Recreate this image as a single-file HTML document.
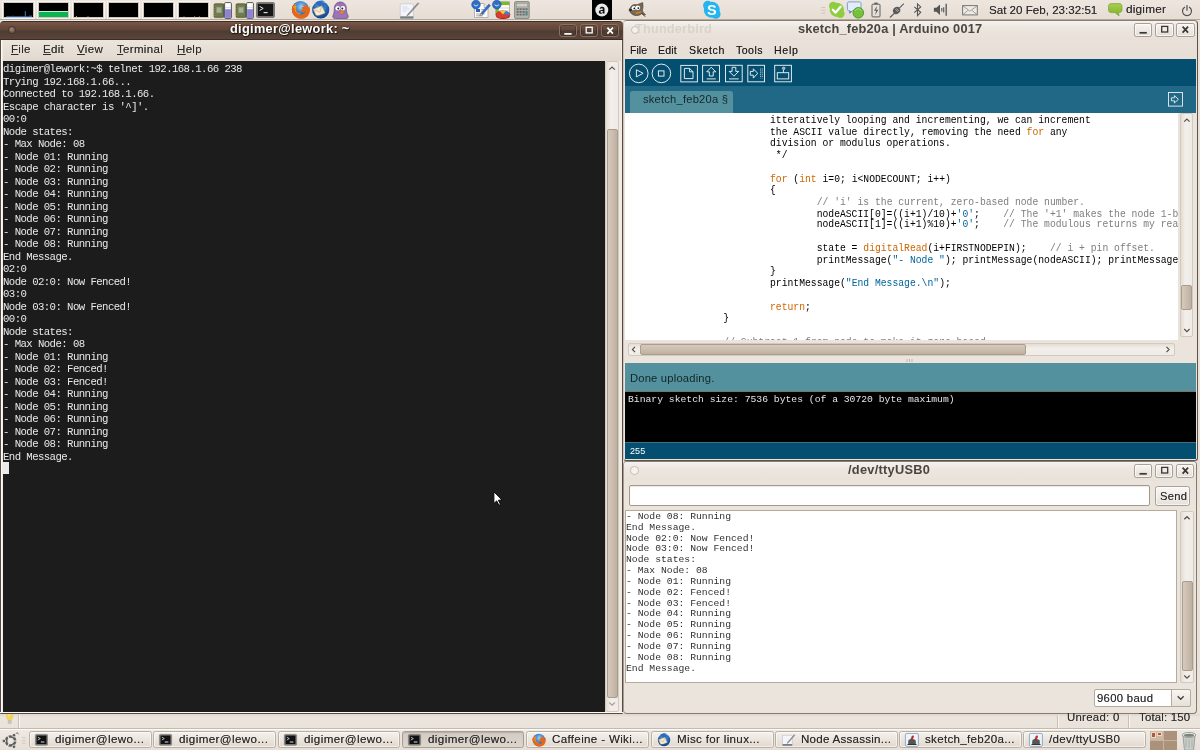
<!DOCTYPE html>
<html><head><meta charset="utf-8"><title>desktop</title>
<style>
html,body{margin:0;padding:0}
body{width:1200px;height:750px;overflow:hidden;position:relative;background:#e9e2da;font-family:"Liberation Sans",sans-serif;color:#2e2e2e}
.a{position:absolute;box-sizing:border-box}
.t{position:absolute;white-space:pre;line-height:1;will-change:transform}
pre{will-change:transform}
svg{position:absolute;overflow:visible}
pre{margin:0}
.mono{font-family:"Liberation Mono",monospace;font-size:9.72px;white-space:pre}
.k{color:#c60}.s{color:#069}.c{color:#7e7e7e}
.mon{position:absolute;box-sizing:border-box;background:#000;border:1px solid #cfc6bc;box-shadow:0 0 0 1px #f7f4f1}
.wb{position:absolute;box-sizing:border-box;border:1px solid #8a7263;border-radius:3px;background:linear-gradient(#705444,#5c4539 48%,#4b3a32 52%,#54403600);box-shadow:inset 0 0 0 1px rgba(40,25,18,.35)}
.wbl{position:absolute;box-sizing:border-box;border:1px solid #a89e94;border-radius:2.2px;background:linear-gradient(#f7f4f1,#e4ded7);box-shadow:inset 0 0 0 1px rgba(255,255,255,.65)}
.btn{position:absolute;box-sizing:border-box;border:1px solid #aaa093;border-radius:2.5px;background:linear-gradient(#f9f7f5,#e7e1da);box-shadow:inset 0 0 0 1px rgba(255,255,255,.6)}
.tb{position:absolute;box-sizing:border-box;border:1px solid #b9b0a5;border-radius:2.5px;background:linear-gradient(#f5f1ec,#ece5de 50%,#e2d9d0);box-shadow:inset 0 0 0 1px rgba(255,255,255,.55)}
.tb.act{background:linear-gradient(#d3cbc2,#ddd6ce);box-shadow:inset 0 1px 1px rgba(0,0,0,.14);border-color:#a89e92}
.sbv{position:absolute;box-sizing:border-box;background:linear-gradient(90deg,#e4ddd5,#f2eee9 40%,#f0ebe6);border:1px solid #d2c9bf;border-radius:2px}
.sbh{position:absolute;box-sizing:border-box;background:linear-gradient(#e4ddd5,#f2eee9 40%,#f0ebe6);border:1px solid #d2c9bf;border-radius:2px}
.th{position:absolute;box-sizing:border-box;background:linear-gradient(90deg,#d6cabd,#cbbdaf 50%,#bfb0a1);border:1px solid #ab9d8e;border-radius:2px}
.thh{position:absolute;box-sizing:border-box;background:linear-gradient(#d6cabd,#cbbdaf 50%,#bfb0a1);border:1px solid #ab9d8e;border-radius:2px}
</style></head><body>
<div class="a" style="left:0.00px;top:0.00px;width:1200.00px;height:20.30px;background:linear-gradient(#ede6df,#e6ddd4);border-bottom:1px solid #b3a89c"></div>
<div class="mon" style="left:3.00px;top:2.30px;width:31.00px;height:16.00px;"><svg style="left:0;top:0" width="29" height="14" viewBox="0 0 29 14"><path d="M2 13.5h26" stroke="#1a4e9a" stroke-width="1"/><path d="M21.3 14V8.2" stroke="#3a8ee6" stroke-width=".9"/><path d="M4 14v-1.2M6 14v-1M9 14v-1.5M12 14v-1M15 14v-1.2M18 14v-1M26 14v-1.8M27.5 14v-1.5" stroke="#2f74d0" stroke-width=".8"/></svg></div>
<div class="mon" style="left:38.00px;top:2.30px;width:31.00px;height:16.00px;"><div class="a" style="left:0;top:7.7px;width:29px;height:1.6px;background:#b8f5d0"></div><div class="a" style="left:0;top:9.2px;width:29px;height:4.8px;background:#0bb352"></div></div>
<div class="mon" style="left:73.00px;top:2.30px;width:31.00px;height:16.00px;"><svg style="left:0;top:0" width="29" height="14" viewBox="0 0 29 14"><path d="M2.5 14v-1M14 14v-.8" stroke="#d8d020" stroke-width=".9"/></svg></div>
<div class="mon" style="left:108.00px;top:2.30px;width:31.00px;height:16.00px;"></div>
<div class="mon" style="left:143.00px;top:2.30px;width:31.00px;height:16.00px;"></div>
<div class="mon" style="left:178.00px;top:2.30px;width:31.00px;height:16.00px;"><svg style="left:0;top:0" width="29" height="14" viewBox="0 0 29 14"><path d="M5 14v-.7M15.5 14v-.7M20.5 14v-.7" stroke="#e08a30" stroke-width=".9"/></svg></div>
<svg style="left:211.80px;top:1.50px" width="22" height="17" viewBox="0 0 22 17" ><rect x="2.2" y="1.8" width="9.6" height="13.6" rx="1" fill="#6f7c52" stroke="#3c4430" stroke-width=".9"/>
<rect x="4.6" y="5.2" width="4.8" height="5.6" fill="#a7b092" stroke="#8d977a" stroke-width=".5"/>
<path d="M1.2 4.2h1.4M1.2 6.6h1.4M1.2 9h1.4M1.2 11.4h1.4M1.2 13.4h1.4M4 1.2v1M6 1.2v1M8 1.2v1M10 1.2v1M4 15.2v1.2M6 15.2v1.2M8 15.2v1.2M10 15.2v1.2" stroke="#c9b24a" stroke-width=".9"/>
<rect x="12.6" y=".6" width="6.8" height="15.8" rx="1" fill="#fff" stroke="#444" stroke-width=".9"/>
<rect x="13.1" y="7.2" width="5.8" height="8.7" fill="#8c82d6"/><path d="M13.1 5.4h5.8" stroke="#c8c8c8" stroke-width=".6"/></svg>
<svg style="left:233.60px;top:1.50px" width="22" height="17" viewBox="0 0 22 17" ><rect x="2.2" y="1.8" width="9.6" height="13.6" rx="1" fill="#6f7c52" stroke="#3c4430" stroke-width=".9"/>
<rect x="4.6" y="5.2" width="4.8" height="5.6" fill="#a7b092" stroke="#8d977a" stroke-width=".5"/>
<path d="M1.2 4.2h1.4M1.2 6.6h1.4M1.2 9h1.4M1.2 11.4h1.4M1.2 13.4h1.4M4 1.2v1M6 1.2v1M8 1.2v1M10 1.2v1M4 15.2v1.2M6 15.2v1.2M8 15.2v1.2M10 15.2v1.2" stroke="#c9b24a" stroke-width=".9"/>
<rect x="12.6" y=".6" width="6.8" height="15.8" rx="1" fill="#fff" stroke="#444" stroke-width=".9"/>
<rect x="13.1" y="7.2" width="5.8" height="8.7" fill="#8c82d6"/><path d="M13.1 5.4h5.8" stroke="#c8c8c8" stroke-width=".6"/></svg>
<svg style="left:255.60px;top:1.50px" width="19" height="16" viewBox="0 0 19 16" ><rect x=".5" y=".5" width="18" height="15" rx="1.2" fill="#8b8b8b" stroke="#6c6c6c" stroke-width=".8"/><rect x="1.8" y="1.8" width="15.4" height="12.4" fill="#161616"/>
<path d="M3.6 4.4l3.6 2-3.6 2" stroke="#e8e8e8" stroke-width="1" fill="none"/><path d="M7.6 10.6h4" stroke="#e8e8e8" stroke-width="1.1"/></svg>
<svg style="left:291.10px;top:0.10px" width="19.0" height="19.0" viewBox="0 0 19.0 19.0" ><defs><radialGradient id="ffg300" cx=".55" cy=".35" r=".6"><stop offset="0" stop-color="#9fd6f5"/><stop offset=".6" stop-color="#2f7fd0"/><stop offset="1" stop-color="#1a4a9a"/></radialGradient></defs>
<g transform="scale(1.000)"><circle cx="9.5" cy="9.5" r="8.6" fill="url(#ffg300)"/>
<path d="M1.2 6.5C.2 10.5 1.5 15 5.2 17.4c4 2.5 9.3 1.6 12-2 2.2-3 2.3-6.8.9-9.8.2 1.6-.1 2.8-.6 3.6-.2-2.6-1.6-4.6-3.3-5.7 1 1.4 1.3 2.6 1.1 3.7-1-1.9-2.6-2.6-4.4-2.4 1.3.5 2 1.3 2.2 2.3-1.2-.3-2.3 0-3 .8.8 0 1.4.4 1.6 1-.5.8-1.5 1-2.3 1 .1 1 .9 1.8 2 2.1 1.2.3 2.2-.2 3-.8-.3 1.8-2 3.2-4.2 3.2-2.7 0-4.6-1.8-5-4.2-.2-1.4.2-2.6.8-3.4-1 .3-1.7.9-2.2 1.700.1-1.500.8-2.900 1.9-3.800C3.700 4.500 2 5 1.200 6.500z" fill="#e8661a"/>
<path d="M5.500 3.600C3.900 4.600 3 6.300 2.900 7.900c.5-.8 1.200-1.400 2.200-1.700-.6.800-1 2-.8 3.400.4 2.400 2.300 4.200 5 4.200" fill="none" stroke="#f7a21b" stroke-width="1"/></g></svg>
<svg style="left:311.10px;top:0.10px" width="19.0" height="19.0" viewBox="0 0 19.0 19.0" ><defs><radialGradient id="tbg320" cx=".5" cy=".3" r=".7"><stop offset="0" stop-color="#6fb0ea"/><stop offset=".6" stop-color="#1f5fb5"/><stop offset="1" stop-color="#123a80"/></radialGradient></defs>
<g transform="scale(1.000)"><circle cx="9.700" cy="9.800" r="8.600" fill="url(#tbg320)"/>
<path d="M4.500 2.500C7 .300 11.500-.200 14 1.200c-2 .1-3.300.7-4.200 1.600 2.500-.2 5 .8 6.700 2.800-1.600-.7-3-.8-4.300-.5 1.500.7 2.700 2 3.300 3.600-2-1.600-4.500-2.200-7-1.500z" fill="#2a6ac0"/>
<path d="M2.200 9.200l8.600-3.400 3.400 7.200-8.800 3.600z" fill="#f4ead2" stroke="#b89a5a" stroke-width=".5"/><path d="M2.200 9.200l6.800 3 1.800-6.400" fill="none" stroke="#c9a766" stroke-width=".6"/>
<path d="M3 14.500c1.500 2.300 4.500 3.600 7.500 3.200 3.500-.5 6-3 6.700-6-1.200 2.400-3.500 3.800-6.200 4-3 .3-5.800-.2-8-1.200z" fill="#1b4f9f"/></g></svg>
<svg style="left:331.00px;top:1.00px" width="18" height="18" viewBox="0 0 18 18" ><path d="M4.500 17.500C2 17.300 1.200 16 2 14.500 3 12.500 3.300 10 3.300 7.500 3.300 3.500 6 1 9.300 1s6 2.500 6 6.200c0 2.300.4 4.800 1.700 7.300.7 1.400.2 2.800-2 3z" fill="#9a73b8" stroke="#6a4a8a" stroke-width=".7"/>
<circle cx="6.800" cy="7.200" r="2.300" fill="#fff"/><circle cx="11.800" cy="7.200" r="2.300" fill="#fff"/><circle cx="7.300" cy="7.500" r="1" fill="#222"/><circle cx="11.300" cy="7.500" r="1" fill="#222"/>
<path d="M7.800 10.800l3.200-1.200 2.600 1.800-3 1.600z" fill="#f08a24" stroke="#b85a10" stroke-width=".4"/></svg>
<svg style="left:398.50px;top:1.50px" width="21" height="18" viewBox="0 0 21 18" ><rect x="1.200" y="1.800" width="13.200" height="14.200" rx=".8" fill="#f4f4fa" stroke="#c4c4cc" stroke-width=".7"/><rect x="1.200" y="14.300" width="13.200" height="2.300" fill="#7a8088"/>
<path d="M3.500 5h5M3.500 7h7M3.500 9h4" stroke="#c9cbe8" stroke-width=".7"/><path d="M19 .8L9.200 11.800l-1.400 2 2.200-1.200L19.800 1.600z" fill="#9a9a9a" stroke="#666" stroke-width=".5"/></svg>
<svg style="left:471.00px;top:0.00px" width="20" height="19" viewBox="0 0 20 19" ><path d="M3.500 3.500h9.500l4 4V17.500H3.500z" fill="#fdfdfd" stroke="#9a9a9a" stroke-width=".7"/><path d="M13 3.500v4h4" fill="#e4e4e4" stroke="#9a9a9a" stroke-width=".6"/>
<rect x="5" y="9" width="4" height="3" fill="#2a5fb5"/><path d="M5 14h9M5 15.800h7M10.300 9.500h4M10.300 11.200h4" stroke="#8a8a8a" stroke-width=".7"/>
<path d="M17.800 4.200l1.600 1.400-8 9-2.600 1.400 1-2.600z" fill="#2f6fd0" stroke="#1a3f80" stroke-width=".5"/><path d="M9.800 13.400l-1 2.600 2.600-1.400z" fill="#e8c060"/>
<circle cx="5" cy="4.600" r="4.300" fill="#2d6fc8" stroke="#1d4f98" stroke-width=".6"/><path d="M2.300 4.200c1 .2 1.700.8 2.700 1.600 1-.8 1.700-1.400 2.700-1.600-.6 1-1.500 1.800-2.700 2.400C3.800 6 2.900 5.200 2.300 4.200z" fill="#fff"/></svg>
<svg style="left:491.50px;top:0.00px" width="19" height="19" viewBox="0 0 19 19" ><rect x="3.800" y="1.800" width="13.700" height="13.500" fill="#fdfdfd" stroke="#9a9a9a" stroke-width=".7"/><rect x="3.800" y="1.800" width="13.700" height="3.300" fill="#7ab82e"/><rect x="3.800" y="5.100" width="3" height="10" fill="#7ab82e"/>
<path d="M6.800 8h10.700M6.800 10.800h10.700" stroke="#bbb" stroke-width=".6"/>
<ellipse cx="11" cy="14.500" rx="7" ry="3.600" fill="#e23a2e" stroke="#a21a12" stroke-width=".5"/><path d="M11 14.500L8 11.300c2-.5 4-.5 6 0z" fill="#f4d21e"/><path d="M11 14.500l3-3.200c2.300.6 3.800 1.700 4 3.200z" fill="#3a7fd8"/><path d="M4 14.500v1.600c0 2 3.100 3 7 3s7-1 7-3v-1.600c0 2-3.100 3.600-7 3.600s-7-1.600-7-3.600z" fill="#b82218"/>
<circle cx="4.800" cy="4.600" r="4.300" fill="#2d6fc8" stroke="#1d4f98" stroke-width=".6"/><path d="M2.100 4.200c1 .2 1.700.8 2.700 1.600 1-.8 1.700-1.400 2.700-1.600-.6 1-1.500 1.800-2.700 2.400C3.600 6 2.700 5.200 2.100 4.200z" fill="#fff"/></svg>
<svg style="left:513.50px;top:0.80px" width="16" height="18" viewBox="0 0 16 18" ><rect x=".6" y=".6" width="14.600" height="16.800" rx="1.200" fill="#b4b4b0" stroke="#77776f" stroke-width=".8"/><rect x="2.400" y="2.300" width="11" height="3.600" fill="#cfd2c6" stroke="#8a8a82" stroke-width=".5"/>
<g fill="#6c6c68"><rect x="2.500" y="7.300" width="2.200" height="1.800"/><rect x="5.500" y="7.300" width="2.200" height="1.800"/><rect x="8.500" y="7.300" width="2.200" height="1.800"/><rect x="11.400" y="7.300" width="2.200" height="1.800"/>
<rect x="2.500" y="10" width="2.200" height="1.800"/><rect x="5.500" y="10" width="2.200" height="1.800"/><rect x="8.500" y="10" width="2.200" height="1.800"/><rect x="2.500" y="12.700" width="2.200" height="1.800"/><rect x="5.500" y="12.700" width="2.200" height="1.800"/><rect x="8.500" y="12.700" width="2.200" height="1.800"/></g><rect x="11.400" y="10" width="2.200" height="4.500" fill="#4a8a8a"/></svg>
<div class="a" style="left:591.80px;top:0.00px;width:19.80px;height:19.80px;background:#000"></div>
<svg style="left:591.80px;top:0.00px" width="20" height="20" viewBox="0 0 20 20" ><circle cx="9.800" cy="10" r="6.500" fill="#e8e8e8"/><path d="M7.600 8.300c.4-1.100 1.300-1.600 2.500-1.600 1.600 0 2.400.8 2.400 2.200v3.600c0 .4.100.7.300 1h-1.700c-.1-.2-.2-.5-.2-.7-.5.600-1.200.9-2 .9-1.300 0-2.100-.7-2.100-1.800 0-1.300 1-1.900 2.700-2l1.300-.1v-.5c0-.7-.4-1-1.100-1-.6 0-1 .2-1.200.7zm3.200 2.700l-1 .1c-.9.1-1.300.4-1.300.9s.4.700.9.700c.8 0 1.400-.5 1.400-1.300z" fill="#111"/></svg>
<svg style="left:627.50px;top:1.50px" width="18" height="16" viewBox="0 0 18 16" ><path d="M2.500 5.500C3.500 3 6 2 9 2.800L14.600.6c.6 2.600.5 5.200-.2 7.800.3 1.500 1.600 3 3.200 4.200-1.200.6-2.600.2-3.800-1.200-1.600 1.800-4.200 2.600-7 2-2.600-.6-4.400-2.200-5-4.200C.800 8.500.800 7.200 2.500 5.500z" fill="#76695a" stroke="#3f362c" stroke-width=".6"/>
<circle cx="5.800" cy="6.200" r="2.100" fill="#fff"/><circle cx="9.800" cy="5.800" r="2.300" fill="#fff"/><circle cx="6.300" cy="6.400" r=".9" fill="#111"/><circle cx="10.300" cy="6.100" r=".9" fill="#111"/>
<path d="M1 8c.8-1 2-1.200 3-.600-.200 1.100-1 1.800-2.200 1.800z" fill="#222"/><path d="M7.500 10.500l5-1.200 1.200 1.200-5.600 1.500z" fill="#e07a1a"/><path d="M13.500 11l3.600 3.600" stroke="#333" stroke-width="1"/></svg>
<svg style="left:702.10px;top:-0.10px" width="19.6" height="19.6" viewBox="0 0 19.6 19.6" ><g transform="scale(1.089)" fill="#24b4f0"><circle cx="9" cy="9" r="7.300"/><circle cx="5.300" cy="5" r="4.300"/><circle cx="12.700" cy="13" r="4.300"/></g></svg>
<div class="t" style="left:706.90px;top:2.53px;font-size:14.5px;letter-spacing:0px;color:#fff;font-weight:bold;">S</div>
<svg style="left:821.20px;top:5.50px" width="5" height="9" viewBox="0 0 5 9" ><path d="M.3 1.500h4M.3 4.300h4M.3 7.100h4" stroke="#cfc6bb" stroke-width="1"/></svg>
<svg style="left:827.50px;top:0.80px" width="17.6" height="17.6" viewBox="0 0 17.6 17.6" ><g transform="scale(0.978)" fill="#8fcc3e"><circle cx="9" cy="9" r="7.300"/><circle cx="5.300" cy="5" r="4.300"/><circle cx="12.700" cy="13" r="4.300"/></g></svg>
<svg style="left:828.00px;top:1.00px" width="17" height="17" viewBox="0 0 17 17" ><path d="M4.800 8.800l2.800 2.800 5-5.800" stroke="#fff" stroke-width="2.300" fill="none" stroke-linecap="round" stroke-linejoin="round"/></svg>
<svg style="left:847.00px;top:1.00px" width="18" height="18" viewBox="0 0 18 18" ><path d="M1.800.900h10.800c.8 0 1.400.6 1.400 1.400v6c0 .8-.6 1.400-1.400 1.400H5.600L2.800 12.200V9.700H1.800C1 9.700.4 9.100.4 8.300v-6C.4 1.500 1 .900 1.800.900z" fill="#e2ecfa" stroke="#6e98cf" stroke-width=".9"/><path d="M2.400 10.200l.2 2.300 2.400-2.300z" fill="#3f72b8"/>
<circle cx="11.300" cy="11.800" r="5.300" fill="#73c23a" stroke="#3f8a1e" stroke-width=".8"/><path d="M8 10a3.600 3.600 0 0 1 6.600 0" fill="none" stroke="#b5e68a" stroke-width="1" opacity=".7"/></svg>
<svg style="left:871.00px;top:1.50px" width="10" height="16" viewBox="0 0 10 16" ><rect x="1" y="2.200" width="8" height="12.700" rx=".8" fill="none" stroke="#5f5f5f" stroke-width="1"/><rect x="3.300" y=".600" width="3.400" height="1.600" fill="#5f5f5f"/><path d="M6.200 3.800L3 8.800h2.200L4 13.200l3.400-5.400H5.200z" fill="#5f5f5f"/></svg>
<svg style="left:888.50px;top:2.50px" width="16" height="16" viewBox="0 0 16 16" ><path d="M1 14.500L5.200 10.300" stroke="#5a5a5a" stroke-width="1.200"/><path d="M10.300 5.200L14.800.700" stroke="#5a5a5a" stroke-width="1.100"/><path d="M4.200 9.200c-.8-1.600-.2-3.200 1.300-4.400 1.400-1.200 3-1.500 4.400-.6l1.300 1.700c.5 1.400 0 3-1.400 4.200-1.400 1.200-3 1.600-4.400.8z" fill="#5a5a5a"/><path d="M6.400 6.200l2.400 2.600M7.600 5.400l2.300 2.500" stroke="#e8e4de" stroke-width=".6"/></svg>
<svg style="left:912.50px;top:3.00px" width="10" height="14" viewBox="0 0 10 14" ><path d="M1.300 3.800l6.400 5.600-3.200 3.200V.900l3.200 3-6.400 5.700" fill="none" stroke="#555" stroke-width="1.100"/></svg>
<svg style="left:933.00px;top:3.00px" width="15" height="14" viewBox="0 0 15 14" ><path d="M.900 4.800h2.500L7 1.400v10.700L3.400 8.800H.900z" fill="#555"/><path d="M8.800 5v3.600M10.700 4.200v5.200" stroke="#555" stroke-width="1.100"/><path d="M13.200 .800v12" stroke="#555" stroke-width="1.300"/></svg>
<svg style="left:962.00px;top:4.60px" width="16" height="11" viewBox="0 0 16 11" ><rect x=".6" y=".6" width="14.700" height="9.300" fill="#eee9e3" stroke="#777" stroke-width="1"/><path d="M1 1l6.900 5.200L14.900 1M1 9.500l4.800-4M14.900 9.500l-4.800-4" fill="none" stroke="#8a8a8a" stroke-width=".8"/></svg>
<div class="t" style="left:989.30px;top:3.68px;font-size:11.6px;letter-spacing:0px;color:#2b2b2b;text-shadow:0 0 .45px rgba(30,30,30,.6);">Sat 20 Feb, 23:32:51</div>
<svg style="left:1108.00px;top:3.00px" width="15" height="14" viewBox="0 0 15 14" ><defs><linearGradient id="ubg" x1="0" y1="0" x2="0" y2="1"><stop offset="0" stop-color="#a9cf4e"/><stop offset="1" stop-color="#7fae2e"/></linearGradient></defs><path d="M3 .600h8.500c1.400 0 2.500 1.100 2.500 2.500v4c0 1.400-1.100 2.500-2.500 2.500H10.300l.9 3.300L6.800 9.600H3C1.600 9.600.5 8.500.5 7.100v-4C.5 1.700 1.600.600 3 .600z" fill="url(#ubg)" stroke="#6f9a26" stroke-width=".6"/></svg>
<div class="t" style="left:1125.80px;top:3.51px;font-size:11.8px;letter-spacing:0.2px;color:#2b2b2b;text-shadow:0 0 .45px rgba(30,30,30,.6);">digimer</div>
<svg style="left:1180.50px;top:4.80px" width="12" height="11" viewBox="0 0 12 11" ><path d="M3.600 2.300a4.500 4.500 0 1 0 4.800 0" fill="none" stroke="#4f4f4f" stroke-width="1.200" stroke-linecap="round"/><path d="M6 .500v4.700" stroke="#4f4f4f" stroke-width="1.200" stroke-linecap="round"/></svg>
<div class="a" style="left:0.00px;top:20.30px;width:622.80px;height:693.20px;background:#efebe7;border-radius:4px 4px 3px 3px"></div>
<div class="a" style="left:2.50px;top:39.80px;width:618.20px;height:21.20px;background:linear-gradient(#ece5dd,#e2d8ce)"></div>
<div class="a" style="left:0.00px;top:20.70px;width:622.80px;height:19.10px;background:linear-gradient(#7b5847 0%,#6b4c3e 22%,#5f463a 47%,#4e3c34 53%,#523f36 72%,#5b4439 100%);border-top:1px solid #3d2e26;border-bottom:1px solid #3a2b24;border-radius:4px 4px 0 0"></div>
<div class="a" style="left:8.30px;top:25.60px;width:8.00px;height:8.00px;border-radius:50%;border:1px solid #45342b;background:radial-gradient(circle at 40% 35%,#a08878,#6d5547 70%)"></div>
<div class="t" style="left:230.00px;top:23.01px;font-size:12.8px;letter-spacing:0.3px;color:#fff;font-weight:bold;text-shadow:.8px .9px .8px #1e140e,0 0 2px #2a1c14;">digimer@lework: ~</div>
<div class="wb" style="left:558.60px;top:23.60px;width:18.50px;height:13.80px;"></div>
<div class="wb" style="left:579.60px;top:23.60px;width:18.50px;height:13.80px;"></div>
<div class="wb" style="left:600.60px;top:23.60px;width:18.50px;height:13.80px;"></div>
<svg style="left:558.60px;top:23.90px" width="62" height="14" viewBox="0 0 62 14" ><path d="M5.300 9.900h7.300" stroke="#fff" stroke-width="1.700" fill="none"/><rect x="27.200" y="3.300" width="6" height="5.600" stroke="#fff" stroke-width="1.300" fill="none"/><path d="M48.400 3.700l5.500 5.900M53.900 3.700l-5.500 5.900" stroke="#fff" stroke-width="1.700" fill="none"/></svg>
<div class="a" style="left:0.00px;top:39.80px;width:1.30px;height:673.00px;background:#5d4a3e"></div>
<div class="a" style="left:621.50px;top:39.80px;width:1.30px;height:673.00px;background:#5d4a3e"></div>
<div class="a" style="left:1.30px;top:39.80px;width:1.20px;height:673.00px;background:#fbfaf8"></div>
<div class="a" style="left:0.00px;top:711.80px;width:622.80px;height:1.00px;background:#fbfaf8"></div>
<div class="a" style="left:0.00px;top:712.80px;width:622.80px;height:1.20px;background:#5d4a3e;border-radius:0 0 4px 4px"></div>
<div class="t" style="left:10.70px;top:43.67px;font-size:11.5px;letter-spacing:0.32px;color:#2e2e2e;text-shadow:0 0 .45px rgba(30,30,30,.6);"><u>F</u>ile</div>
<div class="t" style="left:42.70px;top:43.67px;font-size:11.5px;letter-spacing:0.32px;color:#2e2e2e;text-shadow:0 0 .45px rgba(30,30,30,.6);"><u>E</u>dit</div>
<div class="t" style="left:76.70px;top:43.67px;font-size:11.5px;letter-spacing:0.32px;color:#2e2e2e;text-shadow:0 0 .45px rgba(30,30,30,.6);"><u>V</u>iew</div>
<div class="t" style="left:116.70px;top:43.67px;font-size:11.5px;letter-spacing:0.32px;color:#2e2e2e;text-shadow:0 0 .45px rgba(30,30,30,.6);"><u>T</u>erminal</div>
<div class="t" style="left:176.70px;top:43.67px;font-size:11.5px;letter-spacing:0.32px;color:#2e2e2e;text-shadow:0 0 .45px rgba(30,30,30,.6);"><u>H</u>elp</div>
<div class="a" style="left:2.50px;top:61.00px;width:602.50px;height:650.80px;background:#1c1c1c;overflow:hidden"><pre class="a mono" style="left:.5px;top:1.800px;line-height:12.500px;color:#e8e8e8;font-size:10.7px;letter-spacing:-.587px">digimer@lework:~$ telnet 192.168.1.66 238
Trying 192.168.1.66...
Connected to 192.168.1.66.
Escape character is '^]'.
00:0
Node states:
- Max Node: 08
- Node 01: Running
- Node 02: Running
- Node 03: Running
- Node 04: Running
- Node 05: Running
- Node 06: Running
- Node 07: Running
- Node 08: Running
End Message.
02:0
Node 02:0: Now Fenced!
03:0
Node 03:0: Now Fenced!
00:0
Node states:
- Max Node: 08
- Node 01: Running
- Node 02: Fenced!
- Node 03: Fenced!
- Node 04: Running
- Node 05: Running
- Node 06: Running
- Node 07: Running
- Node 08: Running
End Message.</pre><div class="a" style="left:.8px;top:400.600px;width:5.500px;height:12px;background:#eaeaea"></div></div>
<div class="sbv" style="left:605.20px;top:61.00px;width:14.30px;height:651.00px;"></div>
<div class="th" style="left:607.20px;top:129.30px;width:10.60px;height:568.50px;"></div>
<svg style="left:605.20px;top:61.00px" width="14" height="651" viewBox="0 0 14 651" ><path d="M4.300 8.600L7.100 6l2.800 2.600" stroke="#5a5048" fill="none" stroke-width="1.200"/><path d="M4.300 641.500L7.100 644.100l2.800-2.600" stroke="#aaa197" fill="none" stroke-width="1.200"/></svg>
<svg style="left:490.00px;top:488.00px" width="16" height="20" viewBox="0 0 16 20" ><path d="M3.900 3.800V15.400l2.800-2.500 2.200 4.300 1.600-.8-2.100-4.200 3.700-.2z" fill="#fff" stroke="#000" stroke-width=".9" stroke-linejoin="round"/></svg>
<div class="a" style="left:622.60px;top:20.30px;width:575.00px;height:441.00px;background:linear-gradient(#ebe4dc,#e5dcd3 60px,#ebe4dc 61px);border-radius:4px 4px 3px 3px;border:1.200px solid #5d5148;border-top-color:#8a7f74;border-left-color:#cfc5bb"></div>
<div class="a" style="left:623.80px;top:21.30px;width:572.60px;height:19.00px;background:linear-gradient(#f6f2ee,#ece6df 35%,#e8e0d8);border-radius:3px 3px 0 0"></div>
<div class="a" style="left:630.50px;top:25.80px;width:8.50px;height:8.50px;border-radius:50%;border:1px solid #c6beb5;background:#f4f1ee"></div>
<div class="t" style="left:635.00px;top:23.01px;font-size:12.8px;letter-spacing:0.15px;color:#d9d3cc;font-weight:bold;">Thunderbird</div>
<div class="t" style="left:798.00px;top:23.01px;font-size:12.8px;letter-spacing:0.17px;color:#4b4540;font-weight:bold;">sketch_feb20a | Arduino 0017</div>
<div class="wbl" style="left:1133.80px;top:23.30px;width:18.50px;height:13.80px;"></div>
<div class="wbl" style="left:1155.00px;top:23.30px;width:18.50px;height:13.80px;"></div>
<div class="wbl" style="left:1176.00px;top:23.30px;width:18.50px;height:13.80px;"></div>
<svg style="left:1133.80px;top:23.30px" width="62" height="14" viewBox="0 0 62 14" ><path d="M5.500 9.800h7.300" stroke="#3a3632" stroke-width="1.700" fill="none"/><rect x="27.700" y="3.400" width="6" height="5.600" stroke="#3a3632" stroke-width="1.300" fill="none"/><path d="M48.600 3.700l5.500 5.900M54.100 3.700l-5.500 5.900" stroke="#3a3632" stroke-width="1.700" fill="none"/></svg>
<div class="t" style="left:630.30px;top:44.83px;font-size:10.6px;letter-spacing:0px;color:#1c1c1c;text-shadow:0 0 .45px rgba(30,30,30,.6);">File</div>
<div class="t" style="left:658.30px;top:44.83px;font-size:10.6px;letter-spacing:0.17px;color:#1c1c1c;text-shadow:0 0 .45px rgba(30,30,30,.6);">Edit</div>
<div class="t" style="left:689.30px;top:44.83px;font-size:10.6px;letter-spacing:0.6px;color:#1c1c1c;text-shadow:0 0 .45px rgba(30,30,30,.6);">Sketch</div>
<div class="t" style="left:736.30px;top:44.83px;font-size:10.6px;letter-spacing:0.46px;color:#1c1c1c;text-shadow:0 0 .45px rgba(30,30,30,.6);">Tools</div>
<div class="t" style="left:773.60px;top:44.83px;font-size:10.6px;letter-spacing:0.7px;color:#1c1c1c;text-shadow:0 0 .45px rgba(30,30,30,.6);">Help</div>
<div class="a" style="left:625.00px;top:59.40px;width:571.00px;height:26.80px;background:#044f6f"></div>
<div class="a" style="left:625.00px;top:86.10px;width:571.00px;height:26.50px;background:#216886"></div>
<div class="a" style="left:630.00px;top:91.00px;width:103.40px;height:21.60px;background:#54919e;border-radius:2.500px 2.500px 0 0"></div>
<div class="t" style="left:642.50px;top:94.02px;font-size:11.2px;letter-spacing:0.2px;color:#15262a;">sketch_feb20a §</div>
<svg style="left:623.00px;top:59.50px" width="575" height="27" viewBox="0 0 575 27" fill="none" stroke="#e9f1f4" stroke-width="0.950"><circle cx="15.750" cy="13.400" r="9.300"/><path d="M13.400 9.750L20.100 13.300L13.400 16.900Z"/>
<circle cx="38.400" cy="13.400" r="9.300"/><rect x="35.400" y="10.900" width="5.600" height="5.200"/>
<rect x="57.800" y="5.400" width="16.600" height="16.500"/><path d="M61.400 8.400H66.600L70 11.800V18.600H61.400ZM66.600 8.400V11.800H70"/>
<rect x="79.600" y="5.300" width="16.900" height="16.500"/><path d="M88.200 7.300L92.800 11.800H90.200V16H86.300V11.800H83.700ZM83.700 18.900H92.800"/>
<rect x="102.500" y="5.300" width="16.700" height="16.500"/><path d="M109.100 7.300H112.800V11.400H115.700L110.950 16.200L106.200 11.400H109.100ZM106 18.900H115.700"/>
<rect x="124.800" y="5.300" width="16.700" height="16.500"/><path d="M127.300 11.400H130.300V8.900L134.750 13.300L130.300 18.100V15.200H127.300Z"/><path d="M137.600 8.500V18.300M139.300 8.500V18.300" stroke-dasharray="1 0.900" stroke-width="1" stroke="#b9d0da"/>
<rect x="151.700" y="5.300" width="16.700" height="16.500"/><rect x="154.300" y="12.700" width="11.400" height="6.200"/><path d="M160.400 9.800V12.700"/><circle cx="160.700" cy="8.300" r="1.300" fill="#9aa" stroke="#e8eef0" stroke-width=".6"/></svg>
<svg style="left:1168.00px;top:92.30px" width="15" height="15" viewBox="0 0 15 15" ><rect x=".5" y=".5" width="14" height="13.600" fill="none" stroke="#e9f1f4" stroke-width=".9"/><path d="M3.400 5.800h3V3.600l4 3.700-4 3.700V8.800h-3z" fill="none" stroke="#e9f1f4" stroke-width=".9"/></svg>
<div class="a" style="left:625.00px;top:112.60px;width:552.60px;height:227.60px;background:#fff;overflow:hidden"><pre class="a mono" style="left:5.3px;top:1.1px;line-height:9.7225px;color:#000;transform-origin:0 0;transform:translateY(.5px) scaleY(1.2)">                        itteratively looping and incrementing, we can increment
                        the ASCII value directly, removing the need <span class="k">for</span> any
                        division or modulus operations.
                         */

                        <span class="k">for</span> (<span class="k">int</span> i=0; i&lt;NODECOUNT; i++)
                        {
                                <span class="c">// 'i' is the current, zero-based node number.</span>
                                nodeASCII[0]=((i+1)/10)+<span class="s">'0'</span>;    <span class="c">// The '+1' makes the node 1-based</span>
                                nodeASCII[1]=((i+1)%10)+<span class="s">'0'</span>;    <span class="c">// The modulous returns my real</span>

                                state = <span class="k">digitalRead</span>(i+FIRSTNODEPIN);    <span class="c">// i + pin offset.</span>
                                printMessage(<span class="s">"- Node "</span>); printMessage(nodeASCII); printMessage(
                        }
                        printMessage(<span class="s">"End Message.\n"</span>);

                        <span class="k">return</span>;
                }

                <span class="c">// Subtract 1 from node to make it zero-based</span></pre></div>
<div class="sbv" style="left:1179.50px;top:112.80px;width:13.90px;height:224.60px;"></div>
<div class="th" style="left:1181.30px;top:285.30px;width:10.70px;height:24.40px;"></div>
<svg style="left:1179.50px;top:112.80px" width="14" height="225" viewBox="0 0 14 225" ><path d="M4.200 8.600L6.900 6l2.700 2.600M4.200 216L6.900 218.600l2.700-2.600" fill="none" stroke="#5a5048" stroke-width="1.200"/></svg>
<div class="sbh" style="left:628.00px;top:342.80px;width:547.40px;height:13.00px;"></div>
<div class="thh" style="left:640.40px;top:343.70px;width:386.00px;height:11.00px;"></div>
<svg style="left:628.00px;top:342.80px" width="548" height="13" viewBox="0 0 548 13" ><path d="M7 3.800L4.400 6.500 7 9.200M538.500 3.800l2.600 2.700-2.600 2.700" fill="none" stroke="#5a5048" stroke-width="1.200"/></svg>
<svg style="left:906.00px;top:358.50px" width="8" height="4" viewBox="0 0 8 4" ><path d="M1 0v3M3.500 0v3M6 0v3" stroke="#b5aca2" stroke-width=".8"/></svg>
<div class="a" style="left:625.00px;top:363.30px;width:571.00px;height:28.30px;background:#54919e"></div>
<div class="t" style="left:630.30px;top:372.82px;font-size:11.2px;letter-spacing:0.2px;color:#12262a;">Done uploading.</div>
<div class="a" style="left:625.00px;top:391.40px;width:571.00px;height:50.40px;background:#000;border-top:1px solid #76766a"></div>
<div class="t mono" style="left:628.300px;top:395.300px;color:#e4e4e4;line-height:10px">Binary sketch size: 7536 bytes (of a 30720 byte maximum)</div>
<div class="a" style="left:625.00px;top:441.60px;width:571.00px;height:17.20px;background:#044f6f;border-top:1px solid #3f6f85"></div>
<div class="t" style="left:630.30px;top:447.48px;font-size:9px;letter-spacing:0.1px;color:#fff;">255</div>
<div class="a" style="left:622.60px;top:461.00px;width:574.40px;height:252.50px;background:#ebe4dc;border-radius:4px 4px 4px 4px;border:1.200px solid #857a70;border-top-color:#8a7f74;border-left-color:#a69b90"></div>
<div class="a" style="left:623.80px;top:462.00px;width:572.00px;height:19.00px;background:linear-gradient(#f6f2ee,#ece6df 35%,#e9e2da);border-radius:3px 3px 0 0"></div>
<div class="a" style="left:630.00px;top:466.00px;width:8.50px;height:8.50px;border-radius:50%;border:1px solid #c6beb5;background:#f4f1ee"></div>
<div class="t" style="left:848.00px;top:464.01px;font-size:12.8px;letter-spacing:0.27px;color:#4b4540;font-weight:bold;">/dev/ttyUSB0</div>
<div class="wbl" style="left:1133.50px;top:464.40px;width:18.50px;height:13.60px;"></div>
<div class="wbl" style="left:1154.60px;top:464.40px;width:18.50px;height:13.60px;"></div>
<div class="wbl" style="left:1175.60px;top:464.40px;width:18.50px;height:13.60px;"></div>
<svg style="left:1133.50px;top:464.30px" width="62" height="14" viewBox="0 0 62 14" ><path d="M5.500 9.800h7.300" stroke="#3a3632" stroke-width="1.700" fill="none"/><rect x="27.700" y="3.400" width="6" height="5.600" stroke="#3a3632" stroke-width="1.300" fill="none"/><path d="M48.600 3.700l5.500 5.900M54.100 3.700l-5.500 5.900" stroke="#3a3632" stroke-width="1.700" fill="none"/></svg>
<div class="a" style="left:629.00px;top:485.30px;width:520.60px;height:20.30px;background:#fff;border:1px solid #a69886;border-radius:2px;box-shadow:inset 0 1px 1px rgba(0,0,0,.08)"></div>
<div class="btn" style="left:1155.20px;top:485.50px;width:35.30px;height:20.00px;"></div>
<div class="t" style="left:1159.70px;top:490.72px;font-size:11.2px;letter-spacing:0.28px;color:#2e2e2e;text-shadow:0 0 .45px rgba(30,30,30,.6);">Send</div>
<div class="a" style="left:624.80px;top:510.30px;width:552.50px;height:173.00px;background:#fff;border:1px solid #b5aa9c;overflow:hidden"><pre class="a mono" style="left:.5px;top:1.2px;line-height:10.833px;color:#303030">- Node 08: Running
End Message.
Node 02:0: Now Fenced!
Node 03:0: Now Fenced!
Node states:
- Max Node: 08
- Node 01: Running
- Node 02: Fenced!
- Node 03: Fenced!
- Node 04: Running
- Node 05: Running
- Node 06: Running
- Node 07: Running
- Node 08: Running
End Message.</pre></div>
<div class="sbv" style="left:1180.00px;top:510.50px;width:14.00px;height:172.50px;"></div>
<div class="th" style="left:1181.50px;top:581.00px;width:11.00px;height:90.00px;"></div>
<svg style="left:1180.00px;top:510.50px" width="14" height="174" viewBox="0 0 14 174" ><path d="M4.300 8.300L7 5.700l2.700 2.600M4.300 164.500L7 167.100l2.700-2.600" fill="none" stroke="#5a5048" stroke-width="1.200"/></svg>
<div class="a" style="left:1093.50px;top:689.00px;width:97.00px;height:18.30px;background:#fff;border:1px solid #b5aa9c;border-radius:2px"></div>
<div class="a" style="left:1171.00px;top:689.00px;width:19.50px;height:18.30px;border:1px solid #b5aa9c;border-radius:0 2px 2px 0;background:linear-gradient(#f8f6f3,#e6e0d9)"></div>
<div class="t" style="left:1097.00px;top:692.73px;font-size:11.3px;letter-spacing:0.32px;color:#2e2e2e;text-shadow:0 0 .45px rgba(30,30,30,.6);">9600 baud</div>
<svg style="left:1171.00px;top:689.00px" width="20" height="18" viewBox="0 0 20 18" ><path d="M6.700 7.300L9.700 10.300l3-3" fill="none" stroke="#4a4038" stroke-width="1.300"/></svg>
<div class="a" style="left:0.00px;top:714.00px;width:1200.00px;height:14.30px;background:linear-gradient(#e0d7ce,#ece5de 25%,#e9e2da);z-index:-1"></div>
<svg style="left:5.8px;top:714.2px;overflow:hidden" width="8" height="11" viewBox="0 .4 8 11"><path d="M.5 2.800C.5 .500 2 -.800 3.700 -.800S6.900 .500 6.900 2.800c0 1.800-1.300 2.600-1.500 4.200H2C1.800 5.400 .5 4.600 .5 2.800z" fill="#f3d65c" stroke="#dcbc3c" stroke-width=".4"/><path d="M2.200 2.500c.3-1.200 1.200-1.800 2-1.800" stroke="#fff6c8" stroke-width=".7" fill="none"/><rect x="2.200" y="7.200" width="3" height="2.700" rx=".4" fill="#cfcfcf" stroke="#9a9a9a" stroke-width=".4"/></svg>
<div class="a" style="left:17.80px;top:714.50px;width:1.00px;height:13.00px;background:#cbbfb2"></div>
<div class="a" style="left:18.80px;top:714.50px;width:1.00px;height:13.00px;background:#f7f4f1"></div>
<div class="a" style="left:1056.50px;top:714.50px;width:1.00px;height:13.00px;background:#cbbfb2"></div>
<div class="a" style="left:1057.50px;top:714.50px;width:1.00px;height:13.00px;background:#f7f4f1"></div>
<div class="a" style="left:1127.80px;top:714.50px;width:1.00px;height:13.00px;background:#cbbfb2"></div>
<div class="a" style="left:1128.80px;top:714.50px;width:1.00px;height:13.00px;background:#f7f4f1"></div>
<div class="t" style="left:1066.70px;top:712.05px;font-size:11.4px;letter-spacing:0.28px;color:#2e2e2e;text-shadow:0 0 .45px rgba(30,30,30,.6);">Unread: 0</div>
<div class="t" style="left:1139.30px;top:712.05px;font-size:11.4px;letter-spacing:0.2px;color:#2e2e2e;text-shadow:0 0 .45px rgba(30,30,30,.6);">Total: 150</div>
<div class="a" style="left:0.00px;top:728.20px;width:1200.00px;height:21.80px;background:linear-gradient(#efe9e3,#e7dfd7);border-top:1px solid #c4bab0;box-shadow:inset 0 1px 0 #fbfaf8"></div>
<svg style="left:2.00px;top:731.50px" width="18" height="18" viewBox="0 0 18 18" ><circle cx="8.6" cy="9" r="4.5" fill="none" stroke="#5e5e5e" stroke-width="2.7"/>
<path d="M8.6 9L16 9M8.6 9L4.9 2.6M8.6 9L4.9 15.400" stroke="#efebe6" stroke-width="1.1"/>
<g fill="#5e5e5e" stroke="#efebe6" stroke-width=".8"><circle cx="1.900" cy="9" r="1.800"/><circle cx="12" cy="3.200" r="1.800"/><circle cx="12" cy="14.800" r="1.800"/></g>
<path d="M13.800 1.600l1.700-.9 1 1.700" fill="none" stroke="#5e5e5e" stroke-width=".8"/></svg>
<svg style="left:22.20px;top:736.80px" width="4" height="8" viewBox="0 0 4 8" ><path d="M0 .800h3.600M0 3.500h3.600M0 6.200h3.600" stroke="#cfc6bb" stroke-width=".9"/></svg>
<div class="tb" style="left:29.30px;top:731.30px;width:122.60px;height:16.40px;"></div>
<svg style="left:35.30px;top:734.20px" width="13" height="12" viewBox="0 0 13 12" ><rect x=".4" y=".4" width="12.200" height="10.800" rx="1" fill="#8d8d8d" stroke="#6a6a6a" stroke-width=".6"/><rect x="1.500" y="1.500" width="10" height="8.600" fill="#111"/><path d="M2.800 3.200l2.500 1.400-2.500 1.400" stroke="#ddd" stroke-width=".8" fill="none"/><path d="M5.800 8h3.600" stroke="#ddd" stroke-width="1"/></svg>
<div class="t" style="left:55.00px;top:732.78px;font-size:11.6px;letter-spacing:0.4px;color:#2b2b2b;text-shadow:0 0 .45px rgba(30,30,30,.6);">digimer@lewo...</div>
<div class="tb" style="left:153.20px;top:731.30px;width:122.60px;height:16.40px;"></div>
<svg style="left:159.20px;top:734.20px" width="13" height="12" viewBox="0 0 13 12" ><rect x=".4" y=".4" width="12.200" height="10.800" rx="1" fill="#8d8d8d" stroke="#6a6a6a" stroke-width=".6"/><rect x="1.500" y="1.500" width="10" height="8.600" fill="#111"/><path d="M2.800 3.200l2.500 1.400-2.500 1.400" stroke="#ddd" stroke-width=".8" fill="none"/><path d="M5.800 8h3.600" stroke="#ddd" stroke-width="1"/></svg>
<div class="t" style="left:179.00px;top:732.78px;font-size:11.6px;letter-spacing:0.4px;color:#2b2b2b;text-shadow:0 0 .45px rgba(30,30,30,.6);">digimer@lewo...</div>
<div class="tb" style="left:277.50px;top:731.30px;width:122.60px;height:16.40px;"></div>
<svg style="left:283.50px;top:734.20px" width="13" height="12" viewBox="0 0 13 12" ><rect x=".4" y=".4" width="12.200" height="10.800" rx="1" fill="#8d8d8d" stroke="#6a6a6a" stroke-width=".6"/><rect x="1.500" y="1.500" width="10" height="8.600" fill="#111"/><path d="M2.800 3.200l2.500 1.400-2.500 1.400" stroke="#ddd" stroke-width=".8" fill="none"/><path d="M5.800 8h3.600" stroke="#ddd" stroke-width="1"/></svg>
<div class="t" style="left:303.50px;top:732.78px;font-size:11.6px;letter-spacing:0.4px;color:#2b2b2b;text-shadow:0 0 .45px rgba(30,30,30,.6);">digimer@lewo...</div>
<div class="tb act" style="left:401.80px;top:731.30px;width:122.60px;height:16.40px;"></div>
<svg style="left:407.80px;top:734.20px" width="13" height="12" viewBox="0 0 13 12" ><rect x=".4" y=".4" width="12.200" height="10.800" rx="1" fill="#8d8d8d" stroke="#6a6a6a" stroke-width=".6"/><rect x="1.500" y="1.500" width="10" height="8.600" fill="#111"/><path d="M2.800 3.200l2.500 1.400-2.500 1.400" stroke="#ddd" stroke-width=".8" fill="none"/><path d="M5.800 8h3.600" stroke="#ddd" stroke-width="1"/></svg>
<div class="t" style="left:428.00px;top:732.78px;font-size:11.6px;letter-spacing:0.4px;color:#2b2b2b;text-shadow:0 0 .45px rgba(30,30,30,.6);">digimer@lewo...</div>
<div class="tb" style="left:526.20px;top:731.30px;width:122.60px;height:16.40px;"></div>
<svg style="left:531.60px;top:732.80px" width="13.8" height="13.8" viewBox="0 0 13.8 13.8" ><defs><radialGradient id="ffg538" cx=".55" cy=".35" r=".6"><stop offset="0" stop-color="#9fd6f5"/><stop offset=".6" stop-color="#2f7fd0"/><stop offset="1" stop-color="#1a4a9a"/></radialGradient></defs>
<g transform="scale(0.726)"><circle cx="9.5" cy="9.5" r="8.6" fill="url(#ffg538)"/>
<path d="M1.2 6.5C.2 10.5 1.5 15 5.2 17.4c4 2.5 9.3 1.6 12-2 2.2-3 2.3-6.8.9-9.8.2 1.6-.1 2.8-.6 3.6-.2-2.6-1.6-4.6-3.3-5.7 1 1.4 1.3 2.6 1.1 3.7-1-1.9-2.6-2.6-4.4-2.4 1.3.5 2 1.3 2.2 2.3-1.2-.3-2.3 0-3 .8.8 0 1.4.4 1.6 1-.5.8-1.5 1-2.3 1 .1 1 .9 1.8 2 2.1 1.2.3 2.2-.2 3-.8-.3 1.8-2 3.2-4.2 3.2-2.7 0-4.6-1.8-5-4.2-.2-1.4.2-2.6.8-3.4-1 .3-1.7.9-2.2 1.700.1-1.500.8-2.900 1.9-3.800C3.700 4.500 2 5 1.200 6.500z" fill="#e8661a"/>
<path d="M5.500 3.600C3.900 4.600 3 6.300 2.900 7.900c.5-.8 1.200-1.400 2.200-1.700-.6.800-1 2-.8 3.400.4 2.400 2.300 4.200 5 4.200" fill="none" stroke="#f7a21b" stroke-width="1"/></g></svg>
<div class="t" style="left:552.00px;top:732.78px;font-size:11.6px;letter-spacing:0.33px;color:#2b2b2b;text-shadow:0 0 .45px rgba(30,30,30,.6);">Caffeine - Wiki...</div>
<div class="tb" style="left:651.20px;top:731.30px;width:122.60px;height:16.40px;"></div>
<svg style="left:656.50px;top:732.80px" width="13.8" height="13.8" viewBox="0 0 13.8 13.8" ><defs><radialGradient id="tbg663" cx=".5" cy=".3" r=".7"><stop offset="0" stop-color="#6fb0ea"/><stop offset=".6" stop-color="#1f5fb5"/><stop offset="1" stop-color="#123a80"/></radialGradient></defs>
<g transform="scale(0.726)"><circle cx="9.700" cy="9.800" r="8.600" fill="url(#tbg663)"/>
<path d="M4.500 2.500C7 .300 11.500-.200 14 1.200c-2 .1-3.300.7-4.200 1.600 2.500-.2 5 .8 6.700 2.800-1.600-.7-3-.8-4.300-.5 1.500.7 2.700 2 3.300 3.600-2-1.600-4.500-2.200-7-1.500z" fill="#2a6ac0"/>
<path d="M2.200 9.200l8.600-3.400 3.400 7.200-8.800 3.600z" fill="#f4ead2" stroke="#b89a5a" stroke-width=".5"/><path d="M2.200 9.200l6.800 3 1.800-6.400" fill="none" stroke="#c9a766" stroke-width=".6"/>
<path d="M3 14.500c1.500 2.300 4.500 3.600 7.500 3.200 3.500-.5 6-3 6.700-6-1.200 2.400-3.500 3.800-6.200 4-3 .3-5.800-.2-8-1.200z" fill="#1b4f9f"/></g></svg>
<div class="t" style="left:677.00px;top:732.78px;font-size:11.6px;letter-spacing:0.33px;color:#2b2b2b;text-shadow:0 0 .45px rgba(30,30,30,.6);">Misc for linux...</div>
<div class="tb" style="left:775.00px;top:731.30px;width:122.60px;height:16.40px;"></div>
<svg style="left:781.80px;top:733.50px" width="13" height="13" viewBox="0 0 13 13" ><rect x=".6" y="1.200" width="9.600" height="10" fill="#f4f4fa" stroke="#c0c0c8" stroke-width=".6"/><rect x=".6" y="10" width="9.600" height="1.800" fill="#7a8088"/><path d="M12.300 .600L6 7.800l-1 1.600 1.600-.9L12.900 1.200z" fill="#999" stroke="#666" stroke-width=".4"/></svg>
<div class="t" style="left:801.00px;top:732.78px;font-size:11.6px;letter-spacing:0.24px;color:#2b2b2b;text-shadow:0 0 .45px rgba(30,30,30,.6);">Node Assassin...</div>
<div class="tb" style="left:899.20px;top:731.30px;width:122.60px;height:16.40px;"></div>
<svg style="left:904.70px;top:733.00px" width="14" height="14" viewBox="0 0 14 14" ><rect x=".4" y=".4" width="13" height="13" rx="1.500" fill="#eef3f8" stroke="#7d98b8" stroke-width=".8"/><path d="M3 10.500c1.500 1.200 6.500 1.200 8 0l-.5-3.500-2.500-1-1-2.500L5.500 6 3.500 7z" fill="#555"/><path d="M6.500 3.500c.5-1.500 2.500-1.500 2.500 0S7.500 6 7 6.500z" fill="#d8232a"/><path d="M2.500 11.500h9" stroke="#333" stroke-width="1"/></svg>
<div class="t" style="left:925.00px;top:732.78px;font-size:11.6px;letter-spacing:0.3px;color:#2b2b2b;text-shadow:0 0 .45px rgba(30,30,30,.6);">sketch_feb20a...</div>
<div class="tb" style="left:1023.30px;top:731.30px;width:123.20px;height:16.40px;"></div>
<svg style="left:1028.80px;top:733.00px" width="14" height="14" viewBox="0 0 14 14" ><rect x=".4" y=".4" width="13" height="13" rx="1.500" fill="#eef3f8" stroke="#7d98b8" stroke-width=".8"/><path d="M3 10.500c1.500 1.200 6.500 1.200 8 0l-.5-3.500-2.500-1-1-2.500L5.500 6 3.500 7z" fill="#555"/><path d="M6.500 3.500c.5-1.500 2.500-1.500 2.500 0S7.500 6 7 6.500z" fill="#d8232a"/><path d="M2.500 11.500h9" stroke="#333" stroke-width="1"/></svg>
<div class="t" style="left:1049.00px;top:732.78px;font-size:11.6px;letter-spacing:0.3px;color:#2b2b2b;text-shadow:0 0 .45px rgba(30,30,30,.6);">/dev/ttyUSB0</div>
<div class="a" style="left:1149.70px;top:730.80px;width:27.50px;height:19.20px;background:#ab937b"></div>
<div class="a" style="left:1149.70px;top:730.80px;width:13.50px;height:9.40px;background:#cdb9a3"></div>
<div class="a" style="left:1163.20px;top:730.80px;width:0.90px;height:19.20px;background:#c5b3a0"></div>
<div class="a" style="left:1149.70px;top:740.20px;width:27.50px;height:0.90px;background:#c5b3a0"></div>
<div class="a" style="left:1150.80px;top:732.00px;width:5.50px;height:6.30px;background:#b4583e;border:.6px solid #e8d8c8"></div>
<div class="a" style="left:1156.80px;top:732.00px;width:5.50px;height:3.70px;background:#b4583e;border:.6px solid #e8d8c8"></div>
<svg style="left:1181.00px;top:730.50px" width="16" height="20" viewBox="0 0 16 20" ><path d="M2 4.500h12l-1.300 13.500c-.1.800-.8 1.200-1.500 1.200H4.800c-.7 0-1.400-.4-1.500-1.200z" fill="#c9cdc8" stroke="#8e938d" stroke-width=".8"/><ellipse cx="8" cy="4" rx="6.800" ry="2.600" fill="#e4e7e3" stroke="#8e938d" stroke-width=".8"/><ellipse cx="8" cy="4.200" rx="5" ry="1.500" fill="#7d827c"/><path d="M5 8v8.500M8 8.300v8.700M11 8v8.500" stroke="#a9aea8" stroke-width=".9"/></svg>
</body></html>
